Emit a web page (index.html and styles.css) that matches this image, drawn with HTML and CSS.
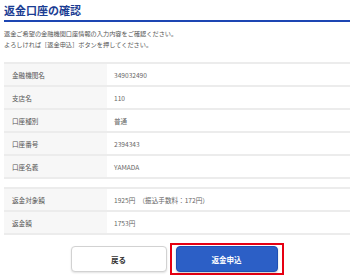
FILE: index.html
```html
<!DOCTYPE html>
<html lang="ja">
<head>
    <meta charset="UTF-8">
    <title>返金口座の確認</title>
    <link rel="stylesheet" href="styles.css">
</head>
<body>
    <div class="page">
        <h1 class="title">返金口座の確認</h1>
        <p class="lead">返金ご希望の金融機関口座情報の入力内容をご確認ください。<br>よろしければ［返金申込］ボタンを押してください。</p>

        <table class="info">
            <tr><th>金融機関名</th><td>349032490</td></tr>
            <tr><th>支店名</th><td>110</td></tr>
            <tr><th>口座種別</th><td>普通</td></tr>
            <tr><th>口座番号</th><td>2394343</td></tr>
            <tr><th>口座名義</th><td>YAMADA</td></tr>
        </table>

        <table class="info amount">
            <tr><th>返金対象額</th><td>1925円　（振込手数料：172円）</td></tr>
            <tr><th>返金額</th><td>1753円</td></tr>
        </table>

        <div class="actions">
            <button class="btn btn-back">戻る</button>
            <span class="highlight">
                <button class="btn btn-submit">返金申込</button>
            </span>
        </div>
    </div>
</body>
</html>
```

FILE: styles.css
```css
* {
    margin: 0;
    padding: 0;
    box-sizing: border-box;
}

body {
    font-family: "Noto Sans CJK JP", "Noto Sans", sans-serif;
    background: #fff;
    color: #555;
}

.page {
    width: 350px;
    padding-left: 4px;
}

.title {
    font-size: 11px;
    line-height: 16px;
    font-weight: 700;
    color: #1b3d93;
    padding: 2px 0 2px;
    border-bottom: 2px solid #1d46b3;
}

.lead {
    margin-top: 7px;
    font-size: 6.2px;
    line-height: 10.5px;
    color: #555;
}

.info {
    width: 100%;
    margin-top: 12px;
    border-collapse: collapse;
}

.info.amount {
    margin-top: 8px;
}

.info th,
.info td {
    height: 23px;
    border-top: 2px solid #ececec;
    border-bottom: 2px solid #ececec;
    font-size: 6.6px;
    font-weight: 400;
    text-align: left;
    vertical-align: middle;
    color: #555;
}

.info th {
    width: 103px;
    padding-left: 8px;
    background: #f7f7f7;
}

.info td {
    padding-left: 7px;
    color: #666;
}

.actions {
    display: flex;
    justify-content: center;
    align-items: center;
    gap: 3px;
    margin-top: 8px;
}

.highlight {
    display: flex;
    border: 2px solid #e60012;
    padding: 1px 4px;
}

.btn {
    height: 26px;
    border-radius: 4px;
    font-family: inherit;
    font-size: 7.5px;
    font-weight: 700;
    cursor: pointer;
}

.btn-back {
    width: 96px;
    background: #fff;
    color: #333;
    border: 1px solid #d2d2d2;
    box-shadow: 0 1px 2px rgba(0,0,0,0.12);
}

.btn-submit {
    width: 102px;
    background: #2c5fc6;
    color: #fff;
    border: 1px solid #1f4fb3;
    box-shadow: 0 1px 2px rgba(0,0,0,0.2);
}
```
